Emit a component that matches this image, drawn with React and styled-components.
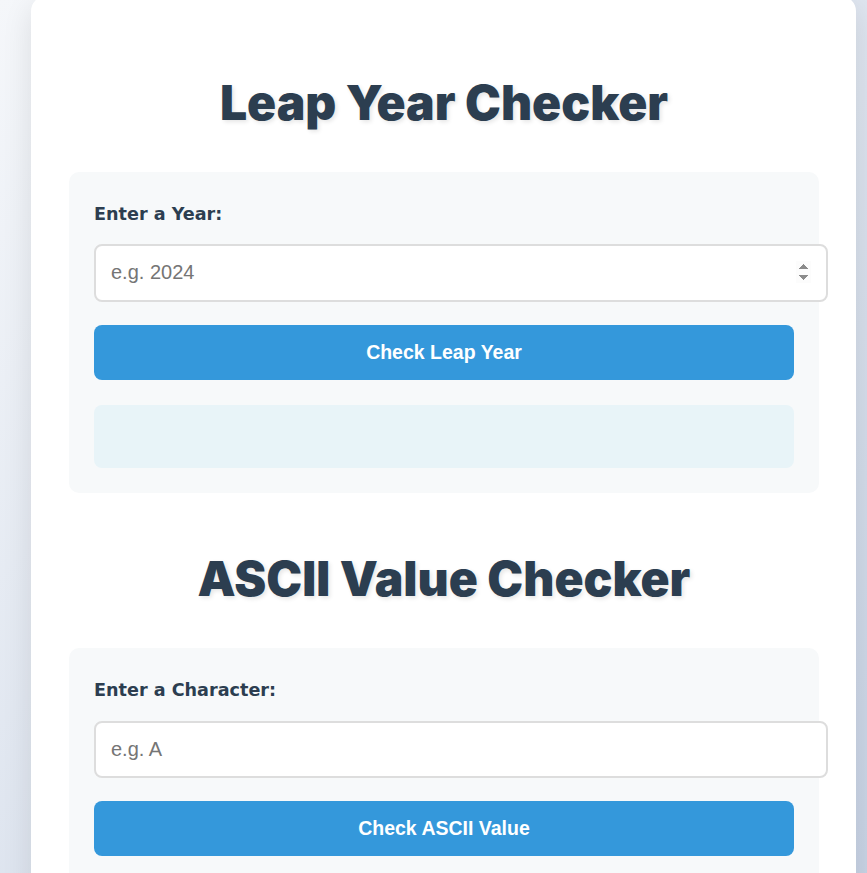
import React from "react";
import styled, { createGlobalStyle } from "styled-components";

const GlobalStyle = createGlobalStyle`
  html, body {
    margin: 0;
    padding: 0;
  }
  body {
    font-family: "DejaVu Sans", Verdana, sans-serif;
    background: linear-gradient(135deg, #f5f7fa 0%, #c3cfe2 100%);
    min-height: 100vh;
  }
`;

const Card = styled.main`
  box-sizing: border-box;
  width: 825px;
  margin: -4px 0 40px 31px;
  padding: 0 37px 37px 38px;
  background: #ffffff;
  border-radius: 15px;
  box-shadow: 0 10px 30px rgba(0, 0, 0, 0.1);
  display: flow-root;
`;

const Title = styled.h1`
  margin: ${(p) => (p.$first ? "77.6px" : "57.6px")} 0 40.5px;
  font-family: Inter, "DejaVu Sans", sans-serif;
  font-weight: 900;
  font-size: 48px;
  line-height: 1.2;
  color: #2c3e50;
  text-align: center;
  text-shadow: 2px 2px 4px rgba(0, 0, 0, 0.1);
`;

const Section = styled.section`
  background: #f7f9fa;
  border-radius: 10px;
  padding: 25px;
`;

const Label = styled.label`
  display: block;
  margin: 7px 0 20px;
  font-family: "DejaVu Sans", Verdana, sans-serif;
  font-weight: 700;
  font-size: 17.6px;
  line-height: 20.5px;
  color: #2c3e50;
`;

const Input = styled.input`
  display: block;
  width: 100%;
  box-sizing: content-box;
  padding: 15px;
  border: 2px solid #dddddd;
  border-radius: 8px;
  background: #ffffff;
  font-family: "Liberation Sans", Arial, sans-serif;
  font-size: 20px;
  line-height: 23.5px;
  height: 23.5px;
  color: #333;
  outline: none;
  &::placeholder {
    color: #757575;
  }
  &::-webkit-inner-spin-button,
  &::-webkit-outer-spin-button {
    opacity: 1;
  }
`;

const Button = styled.button`
  display: block;
  width: 100%;
  height: 55px;
  margin-top: 23px;
  border: none;
  border-radius: 8px;
  background: #3498db;
  color: #ffffff;
  font-family: "Liberation Sans", Arial, sans-serif;
  font-weight: 700;
  font-size: 19.5px;
  cursor: pointer;
`;

const Result = styled.div`
  margin-top: 25px;
  height: 63px;
  border-radius: 8px;
  background: #e8f4f8;
`;

export default function App() {
  return (
    <>
      <GlobalStyle />
      <Card>
        <Title $first>Leap Year Checker</Title>
        <Section>
          <Label htmlFor="year">Enter a Year:</Label>
          <Input id="year" type="number" placeholder="e.g. 2024" />
          <Button>Check Leap Year</Button>
          <Result />
        </Section>

        <Title>ASCII Value Checker</Title>
        <Section>
          <Label htmlFor="char">Enter a Character:</Label>
          <Input id="char" type="text" maxLength={1} placeholder="e.g. A" />
          <Button>Check ASCII Value</Button>
          <Result />
        </Section>
      </Card>
    </>
  );
}
